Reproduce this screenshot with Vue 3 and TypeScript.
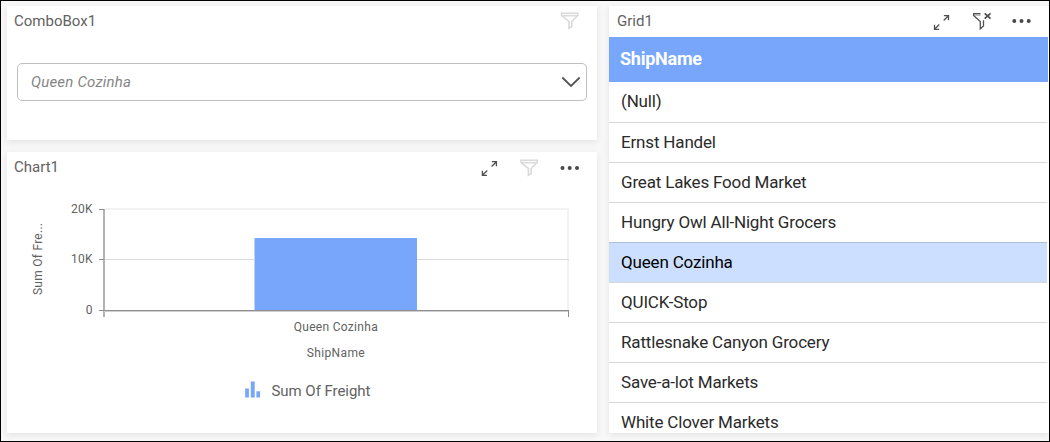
<script setup lang="ts">
const rows: string[] = [
  '(Null)',
  'Ernst Handel',
  'Great Lakes Food Market',
  'Hungry Owl All-Night Grocers',
  'Queen Cozinha',
  'QUICK-Stop',
  'Rattlesnake Canyon Grocery',
  'Save-a-lot Markets',
  'White Clover Markets',
]
const selected = 'Queen Cozinha'
const ticks = [
  { label: '20K', y: 23 },
  { label: '10K', y: 73 },
  { label: '0', y: 124 },
]
</script>

<template>
  <div class="dashboard">
    <div class="left">
      <section class="card combo">
        <header class="head">
          <span class="title">ComboBox1</span>
          <svg class="icon faint" viewBox="0 0 18 18"><path d="M.6 1.2H16.8V3.5L10.8 9.5V14.5L8 16.3V9.5L.6 3.5Z" /><path d="M1.5 3.7H16.5" /></svg>
        </header>
        <div class="select">
          <span>{{ selected }}</span>
          <svg class="chevron" viewBox="0 0 20 12"><path d="M1.3 1.5L10 10L18.7 1.5" /></svg>
        </div>
      </section>

      <section class="card chart">
        <header class="head">
          <span class="title">Chart1</span>
          <svg class="icon" viewBox="0 0 18 18"><path d="M11.8 2.7H16.4V7.3M16.4 2.7L11.6 7.5M7 16.3H2.4V11.7M2.4 16.3L7.2 11.5" /></svg>
          <svg class="icon faint" viewBox="0 0 18 18"><path d="M1 1.2H17.2V3.5L11.2 9.5V14.5L8.4 16.3V9.5L1 3.5Z" /><path d="M1.5 3.7H16.5" /></svg>
          <svg class="icon dots" viewBox="0 0 18 18"><circle cx="2.5" cy="9" r="2" /><circle cx="9.7" cy="9" r="2" /><circle cx="17" cy="9" r="2" /></svg>
        </header>
        <svg class="plot" width="590" height="247" viewBox="0 0 590 247">
          <g shape-rendering="crispEdges">
            <path d="M98 22H562V124H560V24H98Z" fill="#f2f2f2" />
            <rect x="98" y="73" width="464" height="1" fill="#dadada" />
            <rect x="248" y="52" width="162" height="72" fill="#77a6fb" />
            <rect x="247" y="52" width="1" height="72" fill="#bcd3fd" />
            <rect x="96" y="23" width="2" height="108" fill="#b3b3b3" />
            <rect x="97" y="125" width="465" height="1" fill="#cfcfcf" />
            <rect x="97" y="124" width="465" height="1" fill="#8e8e8e" />
            <rect x="561" y="124" width="1" height="7" fill="#8e8e8e" />
            <rect v-for="t in ticks" :key="t.label" x="92" :y="t.y" width="5" height="1" fill="#8e8e8e" />
          </g>
          <g class="labels">
            <text x="85.5" y="27" text-anchor="end" textLength="21.5">20K</text>
            <text x="85.5" y="77" text-anchor="end" textLength="21.5">10K</text>
            <text x="85.5" y="128" text-anchor="end">0</text>
            <text x="328.7" y="145" text-anchor="middle" textLength="84">Queen Cozinha</text>
            <text x="328.7" y="171" text-anchor="middle" textLength="58">ShipName</text>
            <text transform="translate(35 109) rotate(-90)" textLength="72">Sum Of Fre...</text>
          </g>
          <g fill="#77a6fb">
            <rect x="238.2" y="202.5" width="3.7" height="9" />
            <rect x="243.8" y="195.5" width="3.9" height="16" />
            <rect x="249.4" y="205.3" width="3.7" height="6.2" />
          </g>
          <text class="legend" x="264.5" y="210" textLength="99">Sum Of Freight</text>
        </svg>
      </section>
    </div>

    <section class="card grid">
      <header class="head">
        <span class="title">Grid1</span>
        <svg class="icon" viewBox="0 0 18 18"><path d="M10.9 3.7H15.5V8.3M15.5 3.7L10.7 8.5M6.1 17.3H1.5V12.7M1.5 17.3L6.3 12.5" /></svg>
        <svg class="icon" viewBox="0 0 18 18"><path d="M7.5 1.7H.6V3.5L7.3 9.5V16.8L10.5 14V8.2" /><path d="M1.5 3.1H7.5" opacity=".5" /><path class="cross" d="M11.7 1.3L17.5 6.7M17.5 1.3L11.7 6.7" /></svg>
        <svg class="icon dots" viewBox="0 0 18 18"><circle cx="1.3" cy="9" r="2" /><circle cx="8.5" cy="9" r="2" /><circle cx="15.7" cy="9" r="2" /></svg>
      </header>
      <div class="column">ShipName</div>
      <ul>
        <li v-for="r in rows" :key="r" :class="{ active: r === selected, before: r === 'Hungry Owl All-Night Grocers' }">{{ r }}</li>
      </ul>
    </section>
  </div>
</template>

<style>
body { margin: 0; }
</style>

<style scoped>
.dashboard {
  box-sizing: border-box;
  width: 1050px;
  height: 442px;
  border: 1px solid #000;
  background: #f8f8f8;
  padding: 5px 0 8px 6px;
  display: flex;
  gap: 12px;
  overflow: hidden;
  font-family: Roboto, "Liberation Sans", sans-serif;
}
.left { width: 590px; display: flex; flex-direction: column; gap: 12px; }
.card { background: #fff; box-shadow: 0 2px 7px rgba(0, 0, 0, .09); }
.combo { height: 134px; }
.chart { height: 281px; }
.grid { width: 440px; height: 427px; display: flex; flex-direction: column; overflow: hidden; }
.head {
  display: flex;
  align-items: center;
  gap: 22px;
  height: 31px;
  box-sizing: border-box;
  padding: 0 18px 1px 7px;
  flex: none;
}
.chart .head { padding: 1px 19px 0 7px; }
.grid .head { padding-left: 8px; }
.title { flex: 1; font-size: 15px; line-height: 20px; color: #626262; }
.chart .title { padding-bottom: 2px; }
.icon { width: 18px; height: 18px; flex: none; overflow: visible; fill: none; stroke: #505050; stroke-width: 1.3; }
.faint { stroke: #dadada; stroke-width: 1.6; }
.dots { fill: #484848; stroke: none; }
.cross { stroke-width: 1.8; }
.select {
  box-sizing: border-box;
  height: 38px;
  width: 570px;
  margin: 26px 0 0 10px;
  padding: 0 5px 0 13px;
  border: 1px solid #bfbfbf;
  border-radius: 5px;
  display: flex;
  align-items: center;
  justify-content: space-between;
  font-size: 15px;
  font-style: italic;
  letter-spacing: .2px;
  color: #858585;
}
.chevron { width: 20px; height: 12px; fill: none; stroke: #555; stroke-width: 1.8; }
.plot { display: block; margin-top: 3px; }
.labels { font-size: 12px; fill: #626262; }
.legend { font-size: 15px; fill: #626262; }
.column {
  height: 45px;
  box-sizing: border-box;
  margin-right: 1px;
  padding-left: 11px;
  line-height: 44px;
  flex: none;
  background: #77a6fb;
  color: #fff;
  font-size: 18px;
  font-weight: 700;
  letter-spacing: -.25px;
}
ul { list-style: none; margin: 0; padding: 0; }
li {
  box-sizing: border-box;
  height: 40px;
  width: 438px;
  padding-left: 12px;
  border-bottom: 1px solid #d6d6d6;
  line-height: 39px;
  font-size: 17px;
  letter-spacing: -.17px;
  color: #2b2b2b;
}
li:first-child { height: 41px; }
li.active { background: #cddfff; color: #000; }
li.before { border-color: #aebfdd; }
</style>
